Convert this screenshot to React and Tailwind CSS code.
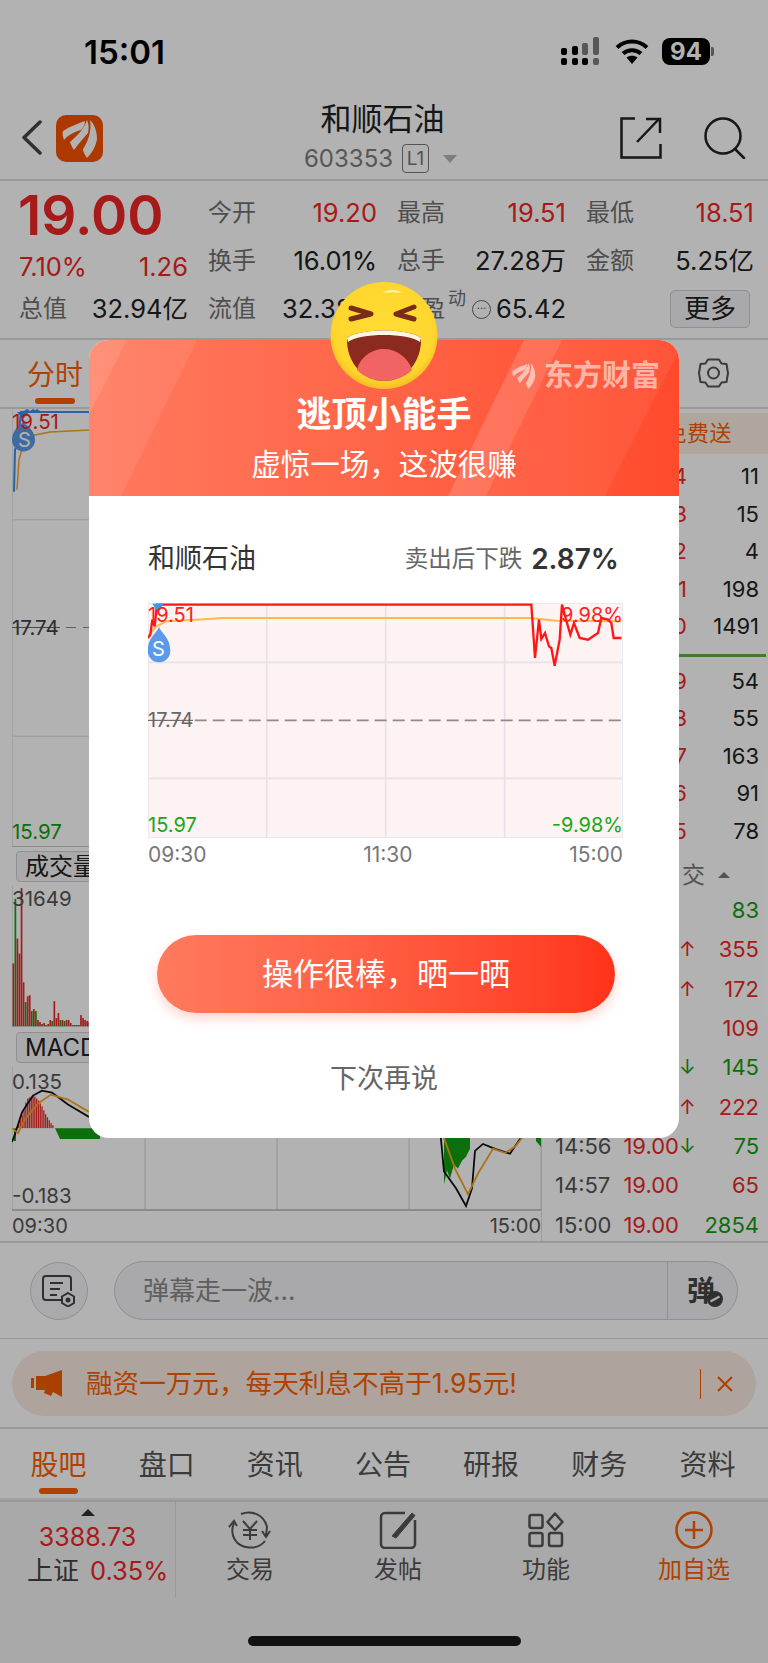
import React from 'react';

const cjk = { fontFamily: 'Inter, "Noto Sans CJK SC", sans-serif' };

const RED = 'text-[#f02626]';
const GREEN = 'text-[#12a012]';
const ORANGE = 'text-[#fc5e00]';

const sellRows = [
  ['19.04', '11'],
  ['19.03', '15'],
  ['19.02', '4'],
  ['19.01', '198'],
  ['19.00', '1491'],
];
const buyRows = [
  ['18.99', '54'],
  ['18.98', '55'],
  ['18.97', '163'],
  ['18.96', '91'],
  ['18.95', '78'],
];
// time, price, direction, volume, volume colour
const trades = [
  ['', '', '', '83', GREEN],
  ['', '', '↑', '355', RED],
  ['', '', '↑', '172', RED],
  ['', '', '', '109', RED],
  ['', '', '↓', '145', GREEN],
  ['', '', '↑', '222', RED],
  ['14:56', '19.00', '↓', '75', GREEN],
  ['14:57', '19.00', '', '65', RED],
  ['15:00', '19.00', '', '2854', GREEN],
];

const volBars = [
  [63, 'r'], [128, 'g'], [88, 'r'], [73, 'r'], [139, 'r'], [44, 'r'], [24, 'g'], [30, 'r'], [31, 'r'], [15, 'g'],
  [17, 'r'], [15, 'g'], [6, 'r'], [4, 'r'], [2, 'r'], [3, 'r'], [1, 'r'], [2, 'r'], [6, 'r'], [5, 'g'],
  [25, 'r'], [8, 'r'], [13, 'r'], [6, 'g'], [6, 'r'], [5, 'g'], [6, 'r'], [6, 'r'], [3, 'r'], [1, 'r'],
  [1, 'r'], [1, 'r'], [1, 'r'], [11, 'r'], [8, 'r'], [6, 'r'], [5, 'r'], [4, 'r'],
];
const macdRed = [3, 8, 13, 18, 26, 30, 31, 32, 33, 32, 30, 28, 25, 22, 18, 14, 11, 8, 5, 3];

// Three-blade feather used by the app icon and the dialog watermark
function Feather(props) {
  return (
    <svg {...props} viewBox="5 3 36 40" fill="currentColor">
      <path d="M6 15C14 10 22 7 28 5C28 9 26 12 24 14C17 16 11 19 7 24C6 21 5 18 6 15Z" />
      <path d="M30 4C32 8 32 13 31 17C26 23 21 28 17 34C15 31 14 29 13 26C20 20 27 13 30 4Z" />
      <path d="M33 4C38 9 40 16 40 23C39 30 35 37 30 42C28 39 26 36 26 33C31 26 35 14 33 4Z" />
    </svg>
  );
}

function StatusBar() {
  return (
    <div className="h-[100px] flex items-start shrink-0">
      <div className="ml-[84px] mt-[33px] text-[33px] leading-[38px] font-semibold text-black">15:01</div>
      <div className="ml-auto mt-[37px] mr-[54px] flex items-center">
        <svg width="39" height="28" viewBox="0 0 39 28">
          <g fill="#000">
            <rect x="0" y="11" width="6" height="7" rx="2" />
            <rect x="11" y="9" width="6" height="9" rx="2" />
            <rect x="0" y="21" width="6" height="7" rx="2" />
            <rect x="11" y="21" width="6" height="7" rx="2" />
            <rect x="21" y="21" width="6" height="7" rx="2" />
          </g>
          <g fill="#7d7d7d">
            <rect x="21" y="6" width="6" height="12" rx="2" />
            <rect x="32" y="0" width="6" height="18" rx="2" />
            <rect x="32" y="21" width="6" height="7" rx="2" />
          </g>
        </svg>
        <svg className="ml-[15px]" width="34" height="25" viewBox="0 0 34 25" fill="none" stroke="#000" strokeWidth="4">
          <path d="M2 8.5C10.500 .5 23.500 .5 32 8.500" />
          <path d="M8 14.500C13 10 21 10 26 14.500" />
          <path d="M17 25l-5.500-6.500c3-2.500 8-2.500 11 0z" fill="#000" stroke="none" />
        </svg>
        <div className="ml-[13px] w-[48px] h-[27px] rounded-[8px] bg-black text-white text-[24px] leading-[27px] font-bold text-center">94</div>
        <div className="ml-[1px] w-[3px] h-[9px] rounded-r-[2px] bg-[#7d7d7d]" />
      </div>
    </div>
  );
}

function BrandMark() {
  return (
    <div className="w-[47px] h-[47px] rounded-[10px] bg-[#f85200] flex items-center justify-center text-white">
      <Feather width="36" height="40" />
    </div>
  );
}

function NavBar() {
  return (
    <div className="h-[81px] shrink-0 relative flex items-center border-b-2 border-[#dcdcdc] pl-[21px] pr-[22px]">
      <svg className="-mt-[4px]" width="21" height="35" viewBox="0 0 21 35" fill="none" stroke="#444" strokeWidth="3.500" strokeLinecap="round" strokeLinejoin="round">
        <path d="M19 2L3 17.500L19 33" />
      </svg>
      <div className="ml-[14px] -mt-[2px]"><BrandMark /></div>
      <div className="flex-1 flex flex-col items-center -mt-[6px] ml-[42px]">
        <div className="text-[31px] leading-[38px] text-[#222]">和顺石油</div>
        <div className="flex items-center h-[30px] mt-[6px] -ml-[4px]">
          <span className="text-[24px] text-[#7d7d7d]">603353</span>
          <span className="ml-[9px] w-[27px] h-[29px] rounded-[4px] border border-[#777] text-[19px] leading-[27px] text-center text-[#777]">L1</span>
          <span className="ml-[14px] w-0 h-0 border-x-[7px] border-x-transparent border-t-[8px] border-t-[#b5b5b5]" />
        </div>
      </div>
      <svg width="42" height="42" viewBox="0 0 42 42" fill="none" stroke="#222" strokeWidth="2.500" className="-mt-[4px]">
        <path d="M15 1.500H1.500V40.500H40.500V27" />
        <path d="M17 25L39 2M26 2H40V16" />
      </svg>
      <svg width="42" height="42" viewBox="0 0 42 42" fill="none" stroke="#222" strokeWidth="2.500" strokeLinecap="round" className="ml-[42px] -mt-[4px]">
        <circle cx="19" cy="19" r="17.500" />
        <path d="M31 32L40 41" />
      </svg>
    </div>
  );
}

function Stat({ label, value, color = 'text-[#222]' }) {
  return (
    <div className="flex items-center justify-between">
      <span className="text-[24px] text-[#707070]">{label}</span>
      <span className={`text-[25.500px] ${color}`}>{value}</span>
    </div>
  );
}

function QuoteHeader() {
  return (
    <div className="h-[159px] shrink-0 flex pl-[19px] border-b-2 border-[#dcdcdc]">
      <div className="w-[169px] relative">
        <div className="mt-[4px] text-[55px] leading-[60px] font-semibold text-[#f02626] -ml-[1px]">19.00</div>
        <div className="flex justify-between -mt-[2px] h-[48px] items-center text-[25.500px] text-[#f02626]">
          <span>7.10%</span>
          <span>1.26</span>
        </div>
        <div className="flex justify-between h-[36px] items-center">
          <span className="text-[24px] text-[#707070]">总值</span>
          <span className="text-[25.500px] text-[#222] whitespace-nowrap">32.94亿</span>
        </div>
      </div>
      <div className="ml-[20px] mt-[8px] grid grid-cols-[169px_169px_168px] grid-rows-[48px_48px_48px] gap-x-[20px]">
        <Stat label="今开" value="19.20" color={RED} />
        <Stat label="最高" value="19.51" color={RED} />
        <Stat label="最低" value="18.51" color={RED} />
        <Stat label="换手" value="16.01%" />
        <Stat label="总手" value="27.28万" />
        <Stat label="金额" value="5.25亿" />
        <Stat label="流值" value="32.38亿" />
        <div className="flex items-center">
          <span className="text-[24px] text-[#707070]">市盈</span>
          <span className="text-[18px] text-[#707070] -mt-[22px] ml-[3px]">动</span>
          <span className="ml-[6px] w-[19px] h-[19px] rounded-full border border-[#666] text-[11px] leading-[14px] text-center text-[#666]">···</span>
          <span className="ml-auto text-[25.500px] text-[#222]">65.42</span>
        </div>
        <div className="flex items-center justify-end">
          <span className="mr-[4px] w-[80px] h-[38px] rounded-[5px] border border-[#cfcfd4] bg-[#f2f2f6] text-[26px] leading-[35px] text-center text-[#222]">更多</span>
        </div>
      </div>
    </div>
  );
}

function TabRow() {
  return (
    <div className="h-[69px] shrink-0 relative flex pl-[27px] pr-[39px] border-b-2 border-[#dcdcdc]">
      <div className="flex flex-col items-center w-[56px]">
        <span className={`mt-[16px] text-[28px] leading-[38px] ${ORANGE}`}>分时</span>
        <span className="mt-[4px] w-[40px] h-[6px] rounded-full bg-[#fc5e00]" />
      </div>
      <svg className="ml-auto mt-[18px]" width="31" height="30" viewBox="0 0 31 30" fill="none" stroke="#555" strokeWidth="2">
        <path d="M10 1.500h11l2.500 4 5 .5L30 15l-1.500 9-5 .5-2.500 4H10l-2.500-4-5-.5L1 15l1.500-9 5-.5z" strokeLinejoin="round" />
        <circle cx="15.500" cy="15" r="5.500" />
      </svg>
    </div>
  );
}

function IntradayChart() {
  return (
    <div className="h-[438px] relative border-b border-[#c8c8cc]">
      <svg className="w-full h-full block" viewBox="12 409 529 438" preserveAspectRatio="none">
        <path d="M12 409V847" stroke="#d0d0d4" fill="none" />
        <path d="M12 520H541M12 737H541" stroke="#dddde0" />
        <path d="M12 628H60" stroke="#666" />
        <path d="M66 628H541" stroke="#8a8a8a" strokeDasharray="10 7" />
        <path d="M14 492L15 450L18 440L21 412H90" fill="none" stroke="#3d8df0" strokeWidth="2" />
        <path d="M24 412l3-2 3 2 3-2 3 2M34 412l3-2 3 2" fill="none" stroke="#3d8df0" strokeWidth="1.500" />
        <path d="M17 490L19 460L24 442L30 436L50 432L90 430" fill="none" stroke="#f5a623" strokeWidth="1.500" />
        <path d="M17 412h12l-6 7z" fill="#3d8df0" />
        <path d="M23 422c2 3 12 7 12 18a11.500 11.500 0 0 1-23 0c0-11 9-15 11-18z" fill="#5b9ae8" />
      </svg>
      <span className="absolute left-0 top-[3px] text-[20.500px] leading-[20px] text-[#f02626] whitespace-nowrap">19.51</span>
      <span className="absolute left-[6px] top-[24px] text-[20px] leading-[15px] text-white">S</span>
      <span className="absolute left-0 top-[209px] text-[20.500px] leading-[20px] text-[#444]">17.74</span>
      <span className={`absolute left-0 top-[413px] text-[20.500px] leading-[20px] ${GREEN}`}>15.97</span>
    </div>
  );
}

function VolumeChart() {
  return (
    <div className="h-[142px] relative border-b border-[#c8c8cc]">
      <svg className="w-full h-full block" viewBox="12 885 529 142" preserveAspectRatio="none">
        <path d="M12 885V1027" stroke="#d0d0d4" fill="none" />
        {volBars.map(([h, kind], i) => (
          <rect key={i} x={12.500 + i * 2.05} y={1027 - h} width="1.700" height={h} fill={kind === 'r' ? '#f02626' : '#12a012'} />
        ))}
      </svg>
      <span className="absolute left-0 top-[4px] text-[20.500px] leading-[20px] text-[#555]">31649</span>
    </div>
  );
}

function MacdChart() {
  return (
    <div className="h-[144px] relative border-b-2 border-[#c8c8cc]">
      <svg className="w-full h-full block" viewBox="12 1067 529 144" preserveAspectRatio="none">
        <path d="M12 1067V1211M145 1067V1211M277 1067V1211M409 1067V1211M541 1067V1211" stroke="#d4d4d8" />
        {macdRed.map((h, i) => (
          <rect key={i} x={18 + i * 1.8} y={1129 - h} width="1.300" height={h} fill="#f02626" />
        ))}
        <path d="M14 1129h2v13h-2z" fill="#12a012" />
        <path d="M55 1129H100V1140H60z" fill="#12a012" />
        <path d="M444 1129V1186L447 1172L450 1180L454 1166L458 1170L462 1162L466 1158L470 1150V1129z" fill="#12a012" />
        <path d="M536 1129H541V1148L536 1142z" fill="#12a012" />
        <path d="M12 1143L15 1135L22 1113L27 1105L33 1096L42 1091L52 1093L68 1105L88 1117L120 1125L440 1130L444 1173L456 1190L466 1208L472 1190L475 1152L483 1145L495 1150L510 1155L520 1140L530 1120" fill="none" stroke="#111" strokeWidth="1.800" />
        <path d="M12 1129L18 1134L25 1120L38 1104L51 1095L68 1100L88 1112L120 1122L440 1128L455 1170L468 1196L478 1175L493 1150L505 1154L515 1148L525 1135L535 1125" fill="none" stroke="#f5a623" strokeWidth="1.800" />
      </svg>
      <span className="absolute left-0 top-[5px] text-[20.500px] leading-[20px] text-[#555]">0.135</span>
      <span className="absolute left-0 top-[119px] text-[20.500px] leading-[20px] text-[#555]">-0.183</span>
    </div>
  );
}

function IndicatorTab({ label }) {
  return (
    <div className="h-[31px] ml-[4px] w-[120px] rounded-[4px] border border-[#cfcfd4] bg-[#f4f4f6] pl-[8px] text-[24px] leading-[29px] text-[#222]">{label}</div>
  );
}

function ChartColumn() {
  return (
    <div className="w-[541px] shrink-0 pl-[12px]">
      <IntradayChart />
      <div className="h-[38px] pt-[4px]"><IndicatorTab label="成交量" /></div>
      <VolumeChart />
      <div className="h-[40px] pt-[5px]"><IndicatorTab label="MACD" /></div>
      <MacdChart />
      <div className="h-[30px] flex items-center justify-between text-[20px] text-[#555]">
        <span>09:30</span>
        <span>15:00</span>
      </div>
    </div>
  );
}

function OrderRow({ price, volume }) {
  return (
    <div className="h-[37.500px] flex items-center text-[22px]">
      <span className="w-[145px] text-right text-[#f02626]">{price}</span>
      <span className="flex-1 text-right pr-[9px] text-[#222]">{volume}</span>
    </div>
  );
}

function SidePanel() {
  return (
    <div className="flex-1 pt-[4px] border-l border-[#dddde0]">
      <div className="h-[41px] bg-[#fbeee3] pr-[36px] text-right text-[22px] leading-[41px] tracking-[0.5px] text-[#fc5e00] whitespace-nowrap overflow-hidden">免费送</div>
      <div className="pt-[4px]">
        {sellRows.map(([p, v]) => <OrderRow key={p} price={p} volume={v} />)}
      </div>
      <div className="mt-[8px] mb-[6px] ml-[1px] h-[3px] mr-[2px] bg-[#60b040]" />
      {buyRows.map(([p, v]) => <OrderRow key={p} price={p} volume={v} />)}
      <div className="h-[40.500px] flex items-center pt-[10px]">
        <span className="ml-[140px] text-[23px] text-[#777]">交</span>
        <span className="ml-[13px] w-0 h-0 border-x-[6px] border-x-transparent border-b-[6px] border-b-[#777]" />
      </div>
      {trades.map(([time, price, dir, vol, color], i) => (
        <div key={i} className="h-[39.300px] flex items-center text-[22px] leading-[28px]">
          <span className="w-[70px] pl-[13px] text-[#555]">{time}</span>
          <span className="w-[67px] text-right text-[#f02626]">{price}</span>
          <span className={`w-[16px] text-center text-[20px] ${dir === '↑' ? RED : GREEN}`}>{dir}</span>
          <span className={`flex-1 text-right pr-[9px] ${color}`}>{vol}</span>
        </div>
      ))}
    </div>
  );
}

function CommentBar() {
  return (
    <div className="h-[98px] shrink-0 flex items-center pl-[30px] pr-[30px] border-t-2 border-b border-[#dcdcdc]">
      <div className="w-[58px] h-[58px] rounded-full border border-[#cfcfd4] bg-[#f4f4f6] flex items-center justify-center">
        <svg width="36" height="33" viewBox="0 0 36 33" fill="none" stroke="#444" strokeWidth="2">
          <path d="M22 26H5a3 3 0 0 1-3-3V5a3 3 0 0 1 3-3h22a3 3 0 0 1 3 3v12" />
          <path d="M9 9h13M9 15h10M9 21h7" />
          <path d="M27 19l6 3.500v6.500l-6 3.500-6-3.500v-6.500z" />
          <circle cx="27" cy="26" r="1.500" fill="#444" />
        </svg>
      </div>
      <div className="ml-[26px] flex-1 h-[59px] rounded-full border border-[#cfcfd4] bg-[#f2f2f6] flex items-center">
        <span className="pl-[28px] flex-1 text-[26px] text-[#888]">弹幕走一波...</span>
        <div className="w-[70px] h-full border-l border-[#cfcfd4] relative flex items-center justify-center pr-[3px]">
          <span className="text-[28px] font-bold text-[#444]">弹</span>
          <svg className="absolute right-[14px] bottom-[12px]" width="16" height="16" viewBox="0 0 16 16">
            <circle cx="8" cy="8" r="8" fill="#444" />
            <path d="M3.500 10.500L12.500 5.500" stroke="#f2f2f6" strokeWidth="2.500" />
          </svg>
        </div>
      </div>
    </div>
  );
}

function PromoBanner() {
  return (
    <div className="h-[90px] shrink-0 px-[12px] pt-[12px] border-b-2 border-[#dcdcdc]">
      <div className="h-[65px] rounded-full bg-[#fbeae3] flex items-center pl-[19px]">
        <svg width="32" height="27" viewBox="0 0 32 27" fill="#f25c00">
          <rect x="0" y="8" width="3" height="10" />
          <path d="M5 6H14L31 0V27L22 22L20 26L13 23L14 20H5z" />
        </svg>
        <span className={`ml-[23px] text-[26.600px] ${ORANGE}`}>融资一万元，每天利息不高于1.95元!</span>
        <span className="ml-auto h-[30px] w-px bg-[#f25c00]" />
        <svg className="ml-[15px] mr-[22px]" width="18" height="18" viewBox="0 0 18 18" stroke="#f25c00" strokeWidth="2">
          <path d="M2 2L16 16M16 2L2 16" />
        </svg>
      </div>
    </div>
  );
}

const contentTabs = ['股吧', '盘口', '资讯', '公告', '研报', '财务', '资料'];

function ContentTabs() {
  return (
    <div className="h-[71px] shrink-0 flex justify-between pl-[30px] pr-[32px] border-b-2 border-[#e8e8e8]">
      {contentTabs.map((tab, i) => (
        <div key={tab} className="flex flex-col items-center w-[57px]">
          <span className={`mt-[17px] text-[28px] leading-[38px] ${i === 0 ? ORANGE : 'text-[#555]'}`}>{tab}</span>
          {i === 0 && <span className="mt-[4px] w-[39px] h-[6px] rounded-full bg-[#fc5e00]" />}
        </div>
      ))}
    </div>
  );
}

function BottomItem({ label, active, children }) {
  return (
    <div className="w-[148px] flex flex-col items-center pt-[9px]">
      <div className="h-[38px] flex items-center">{children}</div>
      <span className={`mt-[6px] text-[24px] leading-[30px] ${active ? ORANGE : 'text-[#555]'}`}>{label}</span>
    </div>
  );
}

function BottomBar() {
  return (
    <div className="flex-1 bg-[#f2f2f4] border-t-2 border-[#dcdcdc] relative">
      <div className="flex">
        <div className="w-[177px] h-[96px] border-r border-[#dcdcdc] flex flex-col items-center">
          <span className="mt-[7px] w-0 h-0 border-x-[7px] border-x-transparent border-b-[7px] border-b-[#333]" />
          <span className="mt-[6px] text-[25px] leading-[30px] text-[#f02626]">3388.73</span>
          <div className="mt-[3px] w-full pl-[27px] flex items-center whitespace-nowrap">
            <span className="text-[26px] leading-[32px] text-[#444]">上证</span>
            <span className="ml-[11px] text-[25.500px] leading-[32px] text-[#f02626]">0.35%</span>
          </div>
        </div>
        <div className="flex">
          <BottomItem label="交易">
            <svg width="44" height="38" viewBox="0 0 44 38" fill="none" stroke="#555" strokeWidth="2">
              <path d="M6 12C1 24 8 36 21 36.500C28 37 33 35 37 30" />
              <path d="M13 3C23 -1 36 3 39 16L38 24" />
              <path d="M1 16L6 10L9 15M34 20L38 26L42 20" />
              <path d="M15 10L22 18L29 10M22 18V29M15 19H29M15 24H29" />
            </svg>
          </BottomItem>
          <BottomItem label="发帖">
            <svg width="38" height="38" viewBox="0 0 38 38" fill="none" stroke="#555" strokeWidth="2.500">
              <path d="M26 2H6a4 4 0 0 0-4 4v27a4 4 0 0 0 4 4h26a4 4 0 0 0 4-4V9" />
              <path d="M13 25L33 2L36 4.500L17 27z" fill="#555" strokeWidth="1" />
            </svg>
          </BottomItem>
          <BottomItem label="功能">
            <svg width="36" height="36" viewBox="0 0 36 36" fill="none" stroke="#555" strokeWidth="2.500">
              <rect x="1.500" y="3" width="13" height="13" rx="2" />
              <rect x="1.500" y="21" width="13" height="13" rx="2" />
              <rect x="21" y="21" width="13" height="13" rx="2" />
              <path d="M27 1.500L34.500 10L27 18L19.500 10z" strokeLinejoin="round" />
            </svg>
          </BottomItem>
          <BottomItem label="加自选" active>
            <svg width="38" height="38" viewBox="0 0 38 38" fill="none" stroke="#fc5e00" strokeWidth="2.500">
              <circle cx="19" cy="19" r="17.500" />
              <path d="M19 10V28M10 19H28" />
            </svg>
          </BottomItem>
        </div>
      </div>
      <div className="absolute left-[248px] bottom-[17px] w-[273px] h-[10px] rounded-full bg-[#191919]" />
    </div>
  );
}

function LaughingFace() {
  return (
    <svg className="absolute left-[240px] -top-[58px]" width="110" height="107" viewBox="0 0 110 107">
      <defs>
        <radialGradient id="faceFill" cx="50%" cy="45%" r="55%">
          <stop offset="0%" stopColor="#ffdd33" />
          <stop offset="85%" stopColor="#ffd62e" />
          <stop offset="100%" stopColor="#f6bc24" />
        </radialGradient>
      </defs>
      <circle cx="55" cy="53.500" r="53.500" fill="url(#faceFill)" />
      <path d="M53 11C60 7 68 7 73 11C67 10 60 10 53 11Z" fill="#fff3b0" />
      <path d="M22 26L42 32L22 37" fill="none" stroke="#7a2c1a" strokeWidth="5" strokeLinecap="round" strokeLinejoin="round" />
      <path d="M85 25L67 32L85 37" fill="none" stroke="#7a2c1a" strokeWidth="5" strokeLinecap="round" strokeLinejoin="round" />
      <path d="M18 56C30 46 80 46 92 56C93 80 76 99 55 99C34 99 17 80 18 56Z" fill="#8b2a1e" />
      <path d="M18 56C30 46 80 46 92 56L91 60C80 50.500 30 50.500 19 60Z" fill="#fff6e0" />
      <path d="M28 88C31 75 43 67 55 67C67 67 79 75 83 88C76 95 66 99 55 99C45 99 35 95 28 88Z" fill="#f26464" />
    </svg>
  );
}

function MiniChart() {
  return (
    <div className="mt-[23px] ml-[59px] mr-[56px] h-[235px] relative">
      <svg className="w-full h-full block" viewBox="55 40 1425 705" preserveAspectRatio="none">
        <rect x="55" y="40" width="1425" height="705" fill="#fdf3f2" />
        <path d="M55 218H1480M55 566H1480M411 40V745M768 40V745M1125 40V745" stroke="#e8e2e8" strokeWidth="5" />
        <rect x="55" y="40" width="1425" height="705" fill="none" stroke="#e8e6ee" strokeWidth="5" />
        <path d="M195 392H1475" stroke="#94898a" strokeWidth="5" strokeDasharray="36 18" />
        <path d="M55 392H190" stroke="#555" strokeWidth="3" />
        <path d="M55 140L80 110L110 95L200 90L280 85H1200L1280 93L1475 95" fill="none" stroke="#ffb84d" strokeWidth="6" />
        <path d="M55 145L62 135L68 90L75 110L82 45H1205L1216 205L1228 90L1235 148L1246 130L1258 170L1265 175L1275 228L1290 150L1297 45L1312 100L1322 135L1333 100L1350 145L1375 150L1405 130L1415 85L1435 90L1445 100L1452 145H1475" fill="none" stroke="#ff1616" strokeWidth="7" />
        <path d="M85 68L68 42H102Z" fill="#4b8fe8" />
        <path d="M88 110C92 130 122 142 122 184A34 34 0 0 1 54 184C54 142 84 130 88 110Z" fill="#5b9ae8" />
      </svg>
      <span className="absolute left-0 top-[2px] text-[20px] leading-[20px] text-[#ff2020]">19.51</span>
      <span className="absolute right-0 top-[2px] text-[20px] leading-[20px] text-[#ff2020]">9.98%</span>
      <span className="absolute left-[4px] top-[34px] text-[20px] leading-[24px] text-white">S</span>
      <span className="absolute left-0 top-[107px] text-[20px] leading-[20px] text-[#666]">17.74</span>
      <span className="absolute left-0 bottom-[3px] text-[20px] leading-[20px] text-[#16a816]">15.97</span>
      <span className="absolute right-0 bottom-[3px] text-[20px] leading-[20px] text-[#16a816]">-9.98%</span>
    </div>
  );
}

function ShareDialog() {
  return (
    <div className="absolute left-[89px] top-[340px] w-[590px] h-[798px] rounded-[20px] bg-white">
      <div className="h-[156px] rounded-t-[20px] relative overflow-hidden bg-gradient-to-r from-[#ff7a5e] to-[#ff4a2c]">
        <svg className="absolute inset-0" width="590" height="156" viewBox="0 0 590 156" fill="#fff">
          <path d="M0 0H108L32 156H0z" opacity="0.08" />
          <path d="M0 0H38L0 75z" opacity="0.1" />
          <path d="M435 0H473L397 156H359z" opacity="0.16" />
          <path d="M473 0H590V10L516 156H397z" opacity="0.06" />
        </svg>
        <div className="absolute left-[423px] top-[19px] flex items-center text-white/55">
          <Feather width="24" height="28" />
          <span className="ml-[8px] text-[29px] leading-[34px] font-bold whitespace-nowrap">东方财富</span>
        </div>
        <div className="relative pt-[53px] text-center text-white">
          <div className="text-[35px] leading-[42px] font-bold">逃顶小能手</div>
          <div className="mt-[9px] text-[29.500px] leading-[40px]">虚惊一场，这波很赚</div>
        </div>
      </div>
      <LaughingFace />
      <div className="mt-[42px] ml-[59px] mr-[60px] h-[42px] flex items-center justify-between">
        <span className="text-[27px] text-[#333]">和顺石油</span>
        <div className="flex items-center">
          <span className="text-[23.500px] text-[#666]">卖出后下跌</span>
          <span className="ml-[9px] text-[28px] font-semibold text-[#333]">2.87%</span>
        </div>
      </div>
      <MiniChart />
      <div className="ml-[59px] mr-[56px] mt-[4px] flex justify-between text-[21px] leading-[26px] text-[#777]">
        <span>09:30</span>
        <span>11:30</span>
        <span>15:00</span>
      </div>
      <button className="block mt-[67px] ml-[68px] w-[458px] h-[78px] rounded-full bg-gradient-to-r from-[#ff7a5e] to-[#ff3218] text-[31px] text-white shadow-[0_6px_12px_rgba(255,70,40,0.22)]">操作很棒，晒一晒</button>
      <div className="mt-[48px] text-center text-[27px] leading-[36px] text-[#666]">下次再说</div>
    </div>
  );
}

export default function App() {
  return (
    <div className="w-[768px] h-[1663px] relative overflow-hidden bg-white" style={cjk}>
      <div className="h-full flex flex-col">
        <StatusBar />
        <NavBar />
        <QuoteHeader />
        <TabRow />
        <div className="h-[832px] shrink-0 flex overflow-hidden">
          <ChartColumn />
          <SidePanel />
        </div>
        <CommentBar />
        <PromoBanner />
        <ContentTabs />
        <BottomBar />
      </div>
      <div className="absolute inset-0 bg-black/30" />
      <ShareDialog />
    </div>
  );
}
